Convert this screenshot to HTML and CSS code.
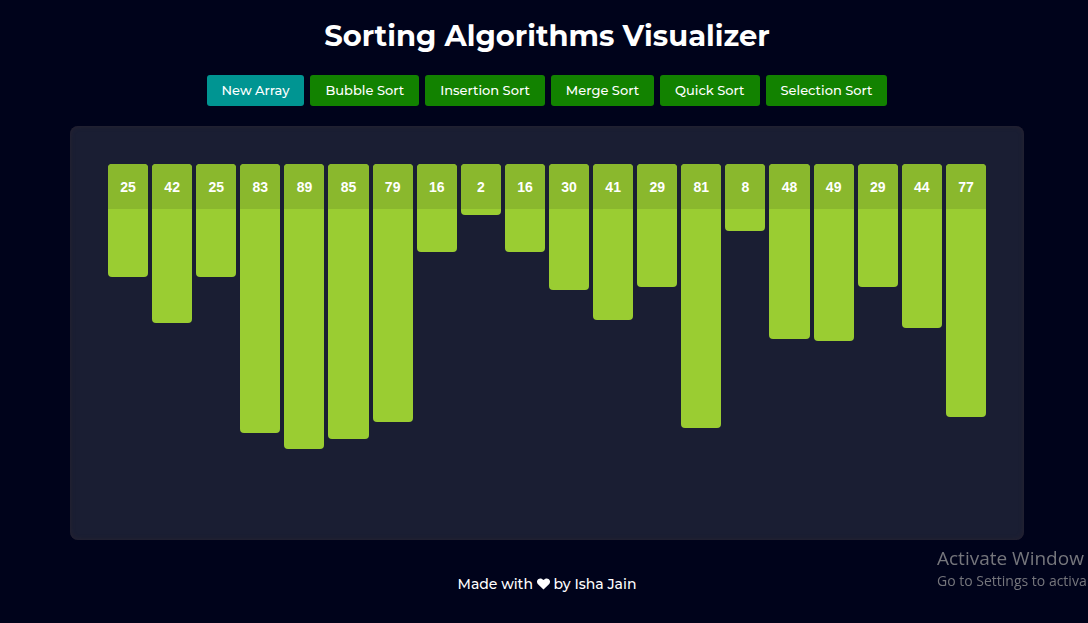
FILE: index.html
```html
<!DOCTYPE html>
<html lang="en">
<head>
<meta charset="utf-8">
<meta name="viewport" content="width=device-width, initial-scale=1">
<title>Sorting Algorithms Visualizer</title>
<link rel="stylesheet" href="styles.css">
</head>
<body class="page">
<header class="header">
  <h1 class="title">Sorting Algorithms Visualizer</h1>
  <nav class="toolbar" aria-label="Algorithms">
    <button type="button" class="btn btn-new">New Array</button>
    <button type="button" class="btn">Bubble Sort</button>
    <button type="button" class="btn">Insertion Sort</button>
    <button type="button" class="btn">Merge Sort</button>
    <button type="button" class="btn">Quick Sort</button>
    <button type="button" class="btn">Selection Sort</button>
  </nav>
</header>
<main class="panel">
  <ol class="bars">
    <li class="bar" style="height:113px"><span class="value">25</span></li>
    <li class="bar" style="height:159px"><span class="value">42</span></li>
    <li class="bar" style="height:113px"><span class="value">25</span></li>
    <li class="bar" style="height:269px"><span class="value">83</span></li>
    <li class="bar" style="height:285px"><span class="value">89</span></li>
    <li class="bar" style="height:275px"><span class="value">85</span></li>
    <li class="bar" style="height:258px"><span class="value">79</span></li>
    <li class="bar" style="height:88px"><span class="value">16</span></li>
    <li class="bar" style="height:51px"><span class="value">2</span></li>
    <li class="bar" style="height:88px"><span class="value">16</span></li>
    <li class="bar" style="height:126px"><span class="value">30</span></li>
    <li class="bar" style="height:156px"><span class="value">41</span></li>
    <li class="bar" style="height:123px"><span class="value">29</span></li>
    <li class="bar" style="height:264px"><span class="value">81</span></li>
    <li class="bar" style="height:67px"><span class="value">8</span></li>
    <li class="bar" style="height:175px"><span class="value">48</span></li>
    <li class="bar" style="height:177px"><span class="value">49</span></li>
    <li class="bar" style="height:123px"><span class="value">29</span></li>
    <li class="bar" style="height:164px"><span class="value">44</span></li>
    <li class="bar" style="height:253px"><span class="value">77</span></li>
  </ol>
</main>
<footer class="footer">Made with <svg class="heart" viewBox="0 0 14 12" role="img" aria-label="love"><path d="M7 12 1.100 6.200C-.5 4.500-.3 2 1.200.9 2.900-.5 5.300-.2 7 1.700 8.700-.2 11.100-.5 12.800.9 14.300 2 14.500 4.500 12.900 6.200Z"/></svg> by Isha Jain</footer>
<aside class="watermark">
  <p class="watermark-title">Activate Window</p>
  <p class="watermark-text">Go to Settings to activa</p>
</aside>
</body>
</html>
```
FILE: styles.css
```css
* {
  box-sizing: border-box;
}

.page {
  margin: 0;
  padding: 16px 64px 0 70px;
  min-height: 100vh;
  overflow: hidden;
  background: #00031b;
  color: #fff;
  font-family: Montserrat, Inter, sans-serif;
}

.header {
  display: flex;
  flex-direction: column;
  align-items: center;
  gap: 19px;
}

.title {
  margin: 0;
  font-size: 29px;
  line-height: 40px;
  font-weight: 700;
}

.toolbar {
  display: flex;
  flex-wrap: wrap;
  justify-content: center;
  gap: 6px;
}

.btn {
  height: 31px;
  padding: 0 15px;
  border: 0;
  border-radius: 3px;
  background: #128200;
  color: #fff;
  font-family: inherit;
  font-size: 13px;
  font-weight: 500;
  line-height: 31px;
  cursor: pointer;
}

.btn-new {
  background: #009592;
}

.panel {
  min-height: 414px;
  margin-top: 20px;
  padding: 38px;
  border-radius: 8px;
  background: #1a1e33;
  box-shadow: inset 0 0 5px #2a2430;
}

.bars {
  display: grid;
  grid-template-columns: repeat(20, 1fr);
  gap: 4px;
  align-items: start;
  margin: 0;
  padding: 0;
  list-style: none;
}

.bar {
  overflow: hidden;
  border-radius: 4px;
  background: #9acd32;
}

.value {
  display: block;
  padding-top: 2px;
  background: #8ab82d;
  font-family: "Liberation Sans", Arial, sans-serif;
  font-size: 14px;
  font-weight: 700;
  line-height: 43px;
  text-align: center;
}

.footer {
  margin-top: 34px;
  font-size: 14px;
  font-weight: 500;
  line-height: 20px;
  text-align: center;
}

.heart {
  width: 13px;
  height: 12px;
  vertical-align: -1px;
  fill: #fff;
}

.watermark {
  position: fixed;
  right: 0;
  bottom: 32px;
  width: 151px;
  color: #75767c;
  font-family: "Segoe UI", "Open Sans", sans-serif;
  white-space: nowrap;
  pointer-events: none;
}

.watermark-title {
  margin: 0;
  font-size: 19px;
  line-height: 26px;
}

.watermark-text {
  margin: 0;
  font-size: 14px;
  line-height: 20px;
}
```
